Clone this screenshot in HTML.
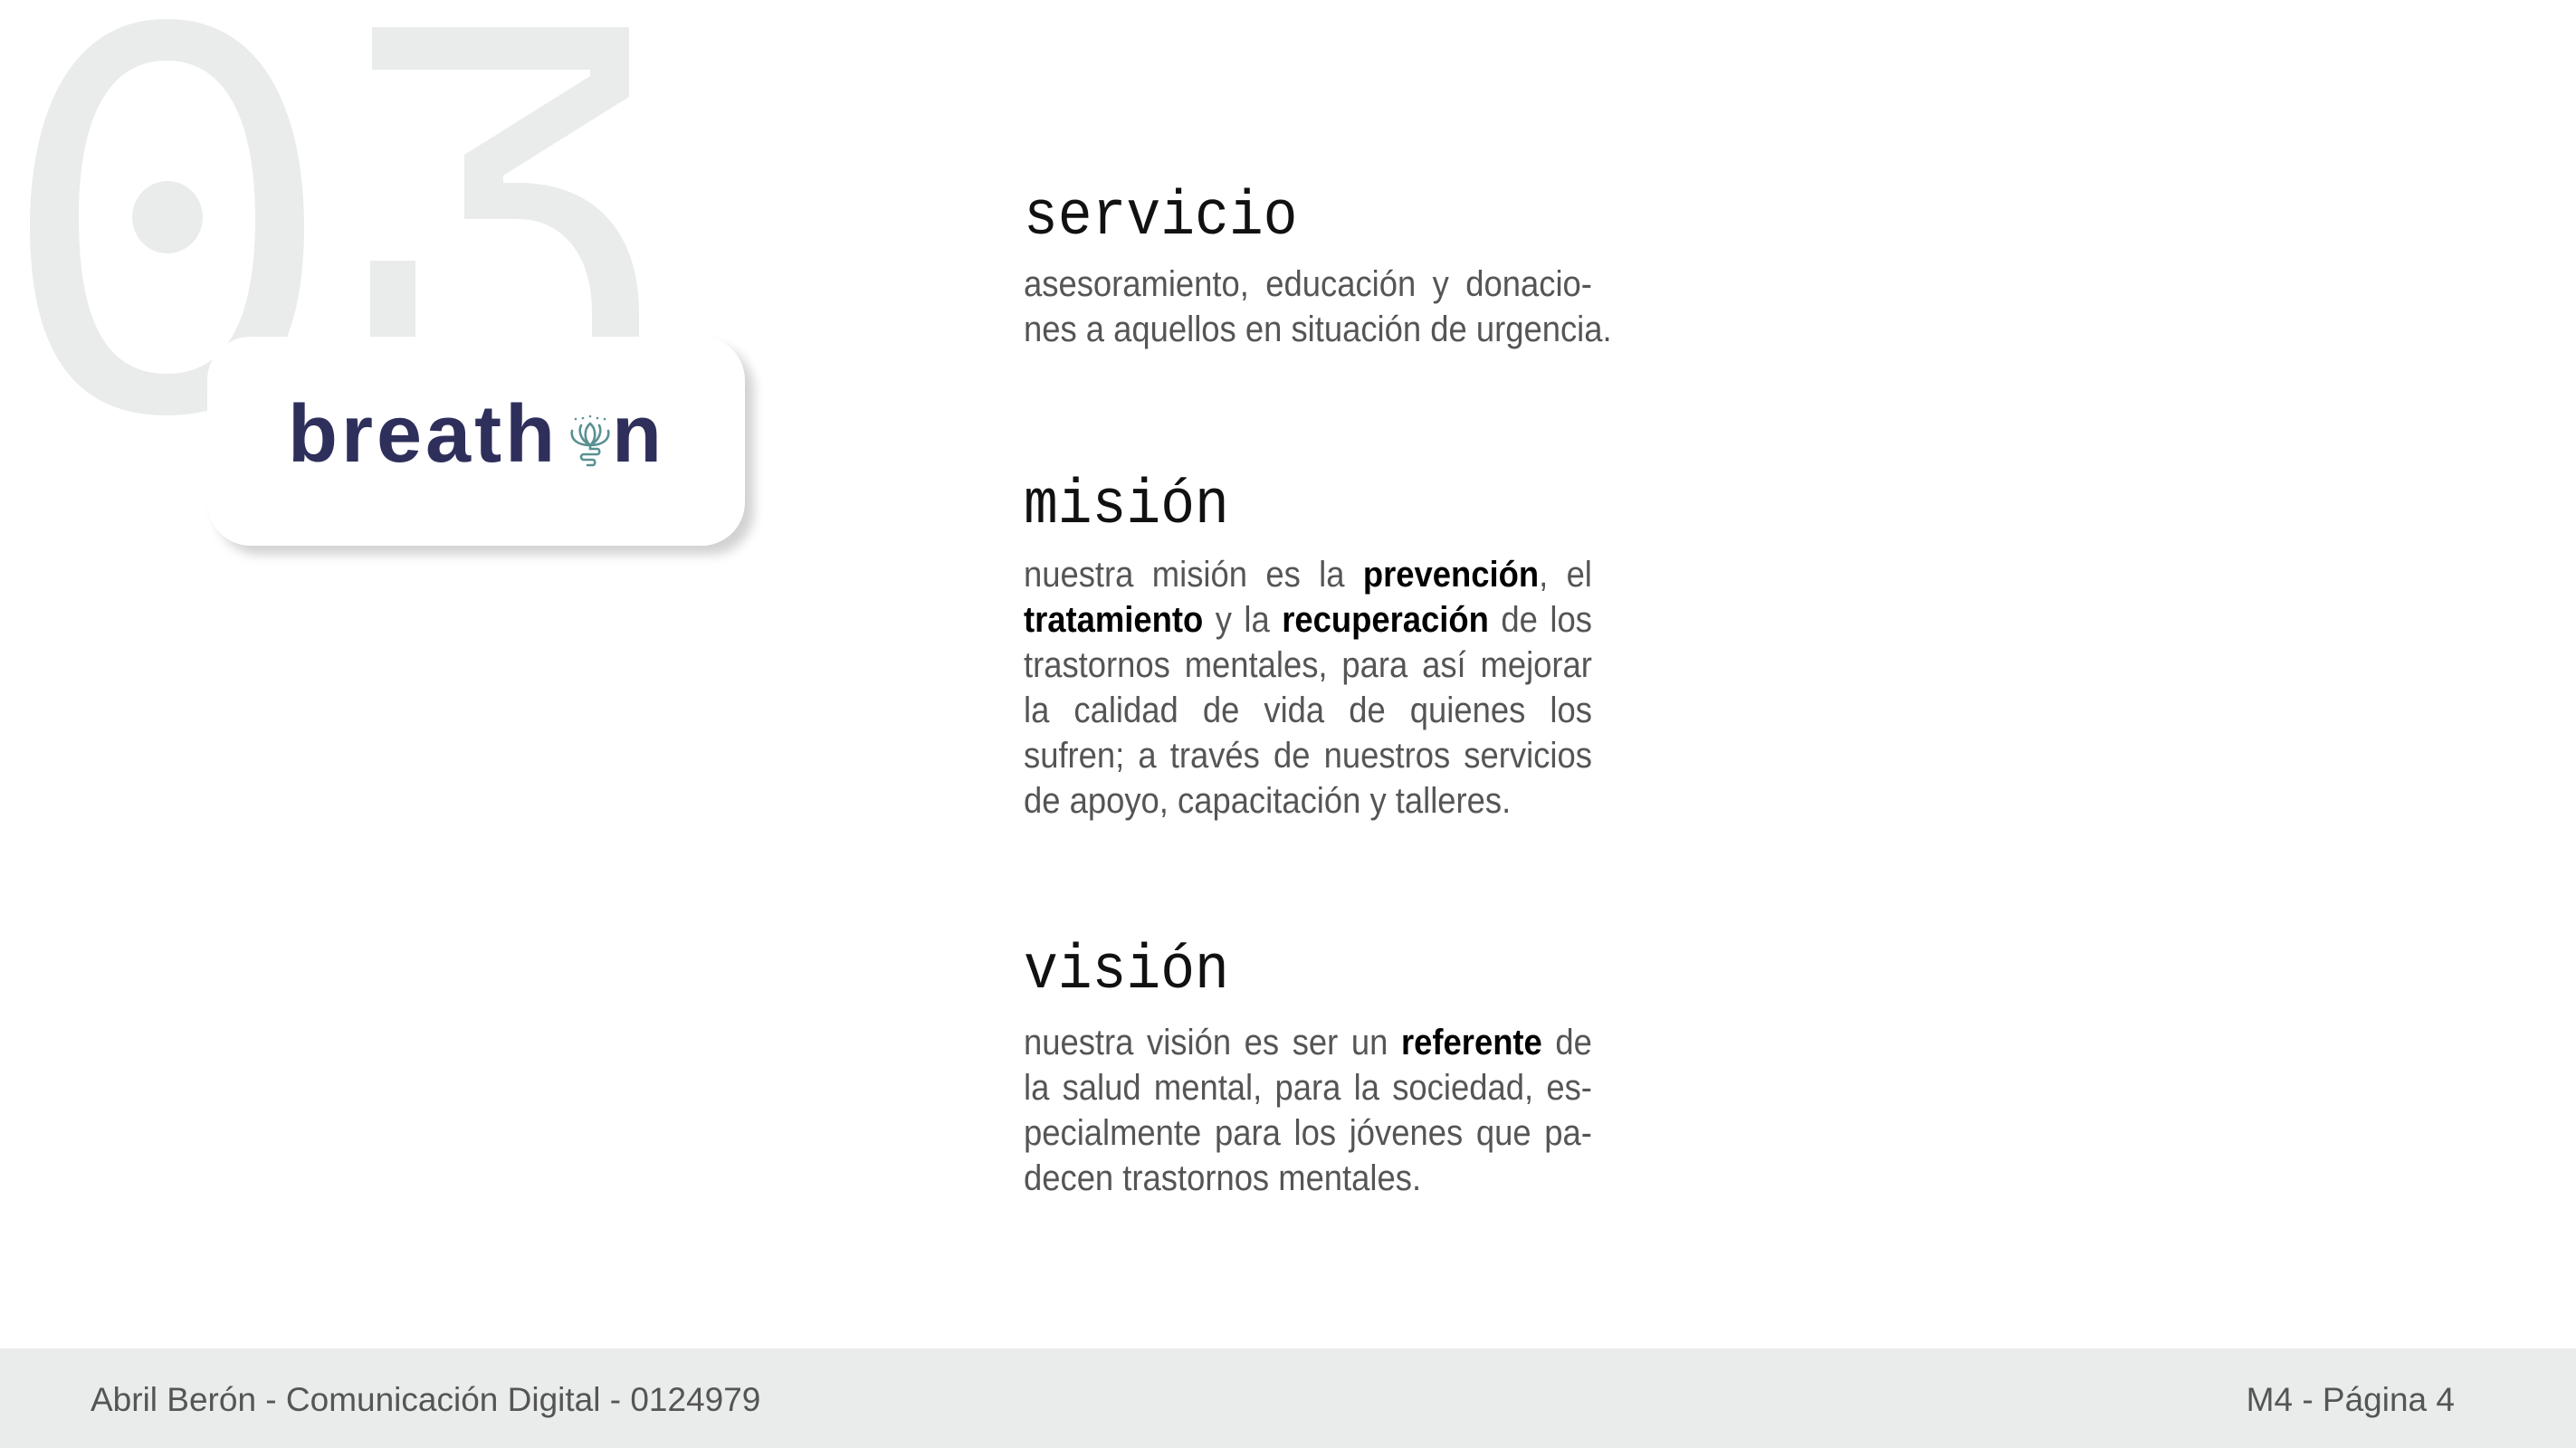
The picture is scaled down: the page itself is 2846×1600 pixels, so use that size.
<!DOCTYPE html>
<html><head><meta charset="utf-8"><style>
html,body{margin:0;padding:0}
body{width:2846px;height:1600px;position:relative;overflow:hidden;background:#fff;font-family:"Liberation Sans",sans-serif}
.h{position:absolute;left:1131px;font-family:"Liberation Mono",monospace;font-size:63px;line-height:63px;color:#111;transform:scaleY(1.1);transform-origin:0 48px;white-space:nowrap}
.b{position:absolute;left:1131px;font-size:40px;line-height:50px;color:#555;white-space:nowrap}
.b div{width:690px;transform:scaleX(0.91);transform-origin:0 0;text-align:justify;text-align-last:justify}
.b div.l{text-align-last:left}
.b strong{color:#000;font-weight:bold}
.foot{position:absolute;left:0;top:1490px;width:2846px;height:110px;background:#e9eceb}
.ft{position:absolute;top:1527px;font-size:37px;line-height:40px;color:#555}
</style></head><body>
<svg style="position:absolute;left:0;top:0" width="900" height="700">
<path fill="#e9eceb" fill-rule="evenodd" d="M184,21 C300,21 336,140 336,250 C336,370 300,459 184,459 C70,459 33,370 33,250 C33,140 70,21 184,21 Z M184,67 C110,67 87,150 87,240 C87,340 110,413 184,413 C258,413 282,340 282,240 C282,150 258,67 184,67 Z"/>
<ellipse cx="185" cy="240" rx="39" ry="40" fill="#e9eceb"/>
<path fill="#e9eceb" d="M411,30 H695 V107 L556,194 V202 H572 C660,202 706,260 706,345 V420 H654 V345 C654,280 620,242 572,242 H513 V171 L652,84 V77 H411 Z"/>
<path fill="#e9eceb" d="M409,288 H459 V420 H409 Z"/>
</svg>
<div style="position:absolute;left:229px;top:372px;width:594px;height:231px;background:#fff;border-radius:48px;box-shadow:10px 10px 12px rgba(0,0,0,0.18)"></div>
<div style="position:absolute;left:318px;top:430px;font-size:90px;line-height:100px;font-weight:bold;color:#2e2f5b;letter-spacing:4px;white-space:nowrap">breath</div>
<svg style="position:absolute;left:627px;top:455px" width="50" height="66" viewBox="0 0 50 60" fill="none" stroke="#5a9090" stroke-width="2.6" stroke-linecap="round">
<circle cx="9" cy="5" r="1.3" fill="#5a9090" stroke="none"/><circle cx="17" cy="4" r="1.3" fill="#5a9090" stroke="none"/><circle cx="25" cy="2" r="1.3" fill="#5a9090" stroke="none"/><circle cx="33" cy="4" r="1.3" fill="#5a9090" stroke="none"/><circle cx="41" cy="5" r="1.3" fill="#5a9090" stroke="none"/>
<path d="M25,10 C18,16 18,28 25,34 C32,28 32,16 25,10 Z"/>
<path d="M15,12 C12,18 14,28 25,34 M35,12 C38,18 36,28 25,34"/>
<path d="M5,18 C3,28 12,34 25,34 C38,34 47,28 45,18"/>
<path d="M25,34 V38 H33 C36,38 36,44 33,44 H18 C14,44 14,50 18,50 H28 C31,50 31,56 28,56 H22"/>
</svg>
<div style="position:absolute;left:676px;top:430px;font-size:90px;line-height:100px;font-weight:bold;color:#2e2f5b">n</div>

<div class="h" style="top:210px">servicio</div>
<div class="b" style="top:289px"><div>asesoramiento, educación y donacio-</div><div class="l">nes a aquellos en situación de urgencia.</div></div>

<div class="h" style="top:529px">misión</div>
<div class="b" style="top:610px">
<div>nuestra misión es la <strong>prevención</strong>, el</div>
<div><strong>tratamiento</strong> y la <strong>recuperación</strong> de los</div>
<div>trastornos mentales, para así mejorar</div>
<div>la calidad de vida de quienes los</div>
<div>sufren; a través de nuestros servicios</div>
<div class="l">de apoyo, capacitación y talleres.</div>
</div>

<div class="h" style="top:1043px">visión</div>
<div class="b" style="top:1127px">
<div>nuestra visión es ser un <strong>referente</strong> de</div>
<div>la salud mental, para la sociedad, es-</div>
<div>pecialmente para los jóvenes que pa-</div>
<div class="l">decen trastornos mentales.</div>
</div>

<div class="foot"></div>
<div class="ft" style="left:100px">Abril Berón - Comunicación Digital - 0124979</div>
<div class="ft" style="right:134px">M4 - Página 4</div>
</body></html>
